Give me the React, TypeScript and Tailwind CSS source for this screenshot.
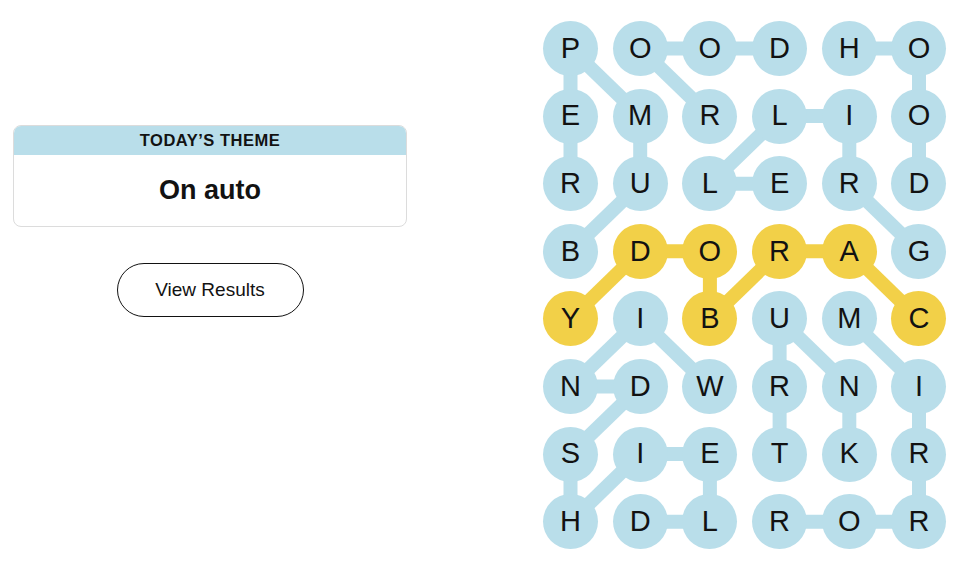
import React from "react";

const letters = [
  "POODHO",
  "EMRLIO",
  "RULERD",
  "BDORAG",
  "YIBUMC",
  "NDWRNI",
  "SIETKR",
  "HDLROR",
];

// cells that belong to the spangram
const spangram = ["4-0", "3-1", "3-2", "4-2", "3-3", "3-4", "4-5"];

type Link = [number, number, number, number];

const blueLinks: Link[] = [
  [0, 0, 1, 0],
  [1, 0, 2, 0],
  [0, 0, 1, 1],
  [1, 1, 2, 1],
  [2, 1, 3, 0],
  [0, 1, 0, 2],
  [0, 2, 0, 3],
  [0, 1, 1, 2],
  [0, 4, 0, 5],
  [0, 5, 1, 5],
  [1, 5, 2, 5],
  [1, 3, 1, 4],
  [1, 3, 2, 2],
  [2, 2, 2, 3],
  [1, 4, 2, 4],
  [2, 4, 3, 5],
  [4, 1, 5, 0],
  [4, 1, 5, 2],
  [5, 0, 5, 1],
  [5, 1, 6, 0],
  [6, 0, 7, 0],
  [6, 1, 6, 2],
  [6, 1, 7, 0],
  [6, 2, 7, 2],
  [7, 1, 7, 2],
  [4, 3, 5, 3],
  [4, 3, 5, 4],
  [5, 3, 6, 3],
  [5, 4, 6, 4],
  [4, 4, 5, 5],
  [5, 5, 6, 5],
  [6, 5, 7, 5],
  [7, 3, 7, 4],
  [7, 4, 7, 5],
];

const yellowLinks: Link[] = [
  [4, 0, 3, 1],
  [3, 1, 3, 2],
  [3, 2, 4, 2],
  [4, 2, 3, 3],
  [3, 3, 3, 4],
  [3, 4, 4, 5],
];

const cx = (c: number) => 27.5 + c * 69.7;
const cy = (r: number) => 27.5 + r * 67.6;

function Links({ links, color }: { links: Link[]; color: string }) {
  return (
    <>
      {links.map(([r1, c1, r2, c2], i) => (
        <line
          key={i}
          x1={cx(c1)}
          y1={cy(r1)}
          x2={cx(c2)}
          y2={cy(r2)}
          stroke={color}
          strokeWidth={14}
        />
      ))}
    </>
  );
}

export default function App() {
  return (
    <div
      className="flex bg-white text-[#121212] w-[959px] h-[571px]"
      style={{ fontFamily: '"Liberation Sans", Arial, sans-serif' }}
    >
      {/* Theme + results */}
      <div className="w-[407px] pl-[13px] pt-[125px] flex flex-col items-center shrink-0">
        <div className="w-[394px] border border-[#dcdcdc] rounded-[8px] overflow-hidden">
          <div className="h-[29px] bg-[#b9deea] flex items-center justify-center text-[16.5px] font-bold tracking-[0.5px] uppercase">
            Today’s Theme
          </div>
          <div className="h-[71px] flex items-center justify-center text-[27px] font-bold">
            On auto
          </div>
        </div>
        <button className="mt-[36px] w-[187px] h-[54px] rounded-full border-[1.5px] border-[#121212] text-[19px] flex items-center justify-center">
          View Results
        </button>
      </div>

      {/* Board */}
      <div className="ml-[136px] pt-[21px]">
        <div className="relative">
          <svg
            className="absolute inset-0"
            width={404}
            height={529}
            viewBox="0 0 404 529"
          >
            <Links links={blueLinks} color="#b9deea" />
            <Links links={yellowLinks} color="#f2d048" />
          </svg>
          <div className="relative grid grid-cols-[repeat(6,55px)] gap-x-[14.7px] gap-y-[12.6px]">
            {letters.map((row, r) =>
              row.split("").map((ch, c) => {
                const gold = spangram.includes(`${r}-${c}`);
                return (
                  <div
                    key={`${r}-${c}`}
                    className={`w-[55px] h-[55px] rounded-full flex items-center justify-center text-[29px] ${
                      gold ? "bg-[#f2d048]" : "bg-[#b9deea]"
                    }`}
                  >
                    {ch}
                  </div>
                );
              })
            )}
          </div>
        </div>
      </div>
    </div>
  );
}
